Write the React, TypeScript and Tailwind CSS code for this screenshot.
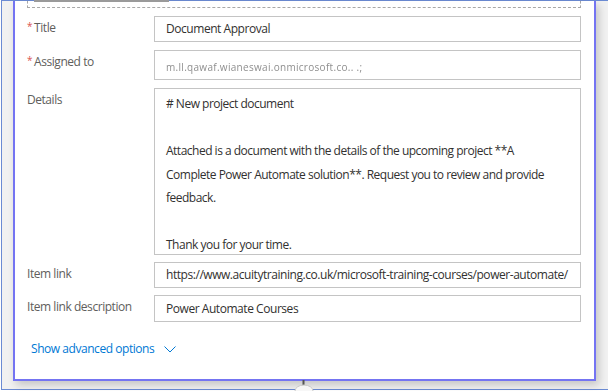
import React from "react";

const font = { fontFamily: '"Open Sans", "Noto Sans", sans-serif' };

function Label({ text, required }: { text: string; required?: boolean }) {
  return (
    <div className="w-[127px] shrink-0 text-[12px] tracking-[-0.45px] leading-[24px] text-[#605e5c] flex items-start">
      {required ? (
        <span className="text-[#d9534f] text-[10px] leading-[20px] mr-[2px]">*</span>
      ) : null}
      <span>{text}</span>
    </div>
  );
}

function Field({
  children,
  h,
}: {
  children: React.ReactNode;
  h: string;
}) {
  return (
    <div
      className={`flex-1 border border-[#c4c4c4] bg-white px-[11px] text-[12px] tracking-[-0.45px] text-[#323130] flex items-center whitespace-nowrap overflow-hidden ${h}`}
    >
      {children}
    </div>
  );
}

export default function App() {
  return (
    <div className="w-[608px] h-[391px] overflow-hidden bg-white relative" style={font}>
      <div className="ml-[1px] h-[390px] border-l border-t border-b border-[#6b8bd3] bg-[#f1f1f1] pl-[11px] pr-[12px]">
        <div className="h-[380px] bg-white border-l-2 border-r-2 border-b-2 border-[#7474f2] shadow-[3px_4px_8px_rgba(0,0,0,0.18)] pl-[12px] pr-[13px] flex flex-col">
          {/* top dashed box remnant */}
          <div className="h-[7px] border-l border-r border-b border-dashed border-[#a8a8a8] relative">
            <div className="absolute left-[6px] top-[-1px] w-[135px] h-[2px] bg-[#9a9a9a]" />
          </div>
          <div className="flex flex-col mt-[8px]">
            <div className="flex">
              <Label text="Title" required />
              <Field h="h-[26px]">Document Approval</Field>
            </div>
            <div className="flex mt-[8px]">
              <Label text="Assigned to" required />
              <Field h="h-[30px]">
                <span className="text-[#8f8f8f] blur-[0.6px] tracking-[0.3px] text-[10px] mt-[4px]">
                  m.ll.qawaf.wianeswai.onmicrosoft.co.. .;
                </span>
              </Field>
            </div>
            <div className="flex mt-[8px]">
              <Label text="Details" />
              <div className="flex-1 h-[167px] border border-[#c4c4c4] bg-white px-[11px] pt-[3px] text-[12px] tracking-[-0.5px] leading-[23.5px] text-[#323130] whitespace-nowrap">
                <div># New project document</div>
                <div>&nbsp;</div>
                <div>Attached is a document with the details of the upcoming project **A</div>
                <div>Complete Power Automate solution**. Request you to review and provide</div>
                <div>feedback.</div>
                <div>&nbsp;</div>
                <div>Thank you for your time.</div>
              </div>
            </div>
            <div className="flex mt-[7px]">
              <Label text="Item link" />
              <Field h="h-[26px]">
                https://www.acuitytraining.co.uk/microsoft-training-courses/power-automate/
              </Field>
            </div>
            <div className="flex mt-[7px]">
              <Label text="Item link description" />
              <Field h="h-[27px]">Power Automate Courses</Field>
            </div>
          </div>
          <div className="mt-[18px] pl-[4px] flex items-center gap-[10px] text-[12px] tracking-[-0.45px] text-[#0078d4]">
            <span>Show advanced options</span>
            <svg width="12" height="7" viewBox="0 0 12 7" fill="none">
              <path d="M0.5 0.5L6 6L11.5 0.5" stroke="#0078d4" strokeWidth="1" />
            </svg>
          </div>
        </div>
      </div>
      {/* connector below card */}
      <svg className="absolute left-[294px] top-[380px]" width="20" height="11" viewBox="0 0 20 11">
        <rect x="8.5" y="0" width="2" height="6" fill="#555" />
        <path d="M1 11 A9 6 0 0 1 19 11" stroke="#c8c8c8" strokeWidth="1" fill="#f7f7f7" />
      </svg>
    </div>
  );
}
